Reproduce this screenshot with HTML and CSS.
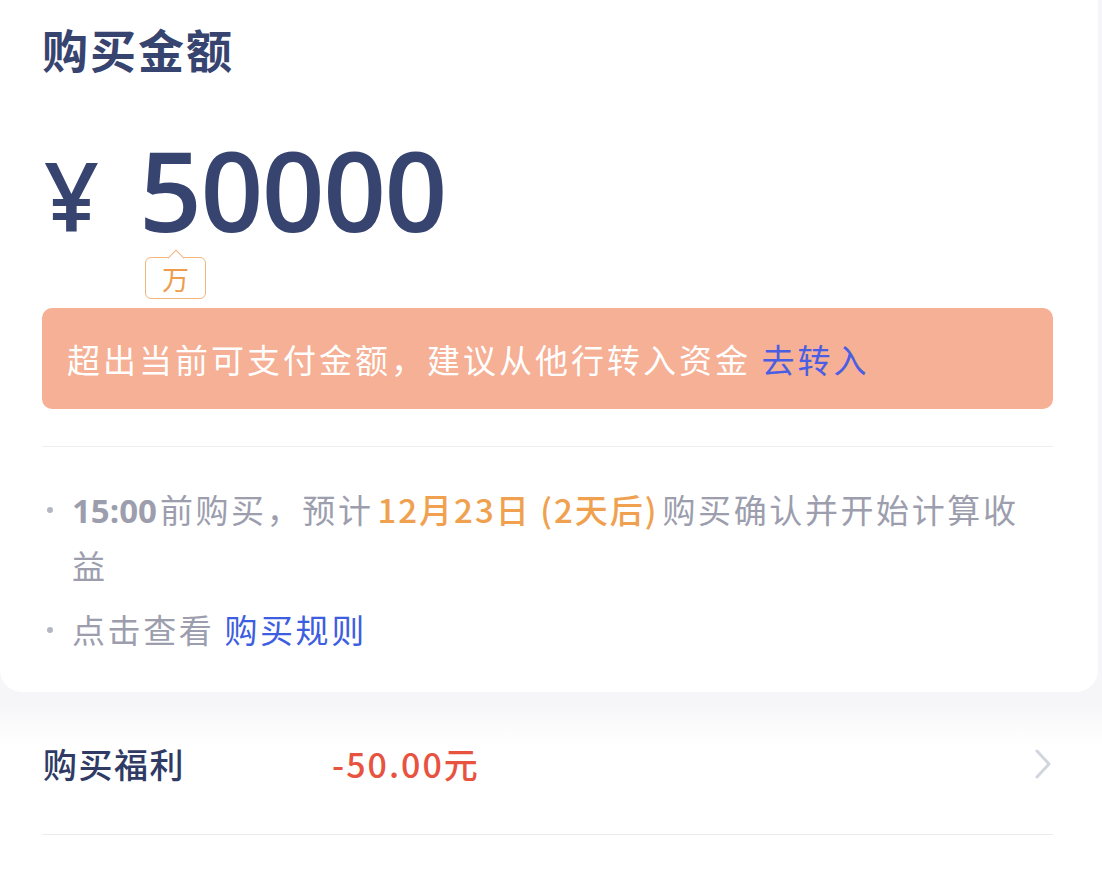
FILE: index.html
```html
<!DOCTYPE html>
<html lang="zh-CN">
<head>
<meta charset="utf-8">
<link rel="stylesheet" href="styles.css">
</head>
<body>
<div class="page">
  <section class="card">
    <h1 class="title">购买金额</h1>
    <div class="amount">
      <span class="yen">¥</span>
      <span class="num">50000</span>
    </div>
    <div class="unit-wrap">
      <span class="unit">万</span>
    </div>
    <div class="alert">超出当前可支付金额，建议从他行转入资金 <a class="link" href="#">去转入</a></div>
    <div class="divider"></div>
    <ul class="notes">
      <li><span class="strong">15:00</span>前购买，预计<span class="orange">12月23日 (2天后)</span>购买确认并开始计算收益</li>
      <li>点击查看 <a class="rule" href="#">购买规则</a></li>
    </ul>
  </section>
  <section class="row">
    <span class="row-label">购买福利</span>
    <span class="row-value">-50.00元</span>
    <svg class="chev" width="20" height="32" viewBox="0 0 20 32"><path d="M4 3 L16 16 L4 29" fill="none" stroke="#d3d5de" stroke-width="3" stroke-linecap="round" stroke-linejoin="round"/></svg>
  </section>
  <div class="row-divider"></div>
</div>
</body>
</html>
```

FILE: styles.css
```css
* { box-sizing: border-box; }
html, body { margin: 0; padding: 0; background: #fff; }
body {
  font-family: "Noto Sans CJK SC", "Noto Sans", sans-serif;
  width: 1102px;
  height: 869px;
  overflow: hidden;
}
.page {
  background: linear-gradient(to bottom, #f6f6f8 0, #f6f6f8 705px, #ffffff 745px);
  height: 869px;
}
.card {
  width: 1098px;
  height: 692px;
  background: #fff;
  border-radius: 0 0 22px 22px;
  padding: 18px 45px 0 42px;
}
.title {
  margin: 0;
  font-size: 46px;
  line-height: 60px;
  font-weight: 700;
  color: #374470;
  letter-spacing: 2px;
}
.amount {
  display: flex;
  align-items: baseline;
  margin-top: 53px;
  height: 116px;
  color: #374470;
  font-family: "Open Sans", "Noto Sans", sans-serif;
  font-weight: 600;
  line-height: 116px;
}
.yen {
  font-size: 96px;
  width: 97px;
  padding-left: 2px;
}
.num {
  font-size: 110px;
  letter-spacing: -1.5px;
}
.unit-wrap {
  margin-top: 10px;
  padding-left: 103px;
  height: 42px;
}
.unit {
  position: relative;
  display: inline-flex;
  align-items: center;
  justify-content: center;
  width: 61px;
  height: 42px;
  border: 1.5px solid #f2b57c;
  border-radius: 6px;
  color: #ef9c4d;
  font-size: 27px;
  line-height: 1;
  background: #fff;
}
.unit::before {
  content: "";
  position: absolute;
  left: 50%;
  width: 11px;
  height: 11px;
  margin-left: -6px;
  background: #fff;
  border-left: 1.5px solid #f2b57c;
  border-top: 1.5px solid #f2b57c;
  transform: rotate(45deg);
  top: -6.5px;
}
.alert {
  margin-top: 9px;
  width: 1011px;
  height: 101px;
  background: #f5b095;
  border-radius: 10px;
  padding-left: 25px;
  display: flex;
  align-items: center;
  color: #fff;
  font-size: 33px;
  letter-spacing: 3px;
  white-space: pre;
}
.link {
  color: #4a5ee3;
  text-decoration: none;
}
.divider {
  margin-top: 37px;
  width: 1011px;
  height: 1px;
  background: #eeeef1;
}
.notes {
  list-style: none;
  margin: 35px 0 0;
  padding: 0 0 0 30px;
  width: 1011px;
  font-size: 33px;
  letter-spacing: 2.6px;
  line-height: 55px;
  color: #9c9eae;
}
.notes li {
  position: relative;
  margin-bottom: 9px;
}
.notes li::before {
  content: "";
  position: absolute;
  left: -25px;
  top: 25px;
  width: 6px;
  height: 6px;
  border-radius: 50%;
  background: #b4b6c3;
}
.strong {
  font-family: "Open Sans", "Noto Sans CJK SC", sans-serif;
  font-weight: 700;
  letter-spacing: 0;
  margin-right: 3px;
}
.orange {
  color: #f0a150;
  font-weight: 500;
  letter-spacing: 2px;
  margin: 0 4px;
}
.rule {
  color: #3d5ee0;
  text-decoration: none;
}
.row {
  display: flex;
  align-items: center;
  height: 142px;
  padding: 0 49px 0 43px;
}
.row-label {
  width: 289px;
  font-size: 34px;
  font-weight: 500;
  color: #2f3b64;
  letter-spacing: 1.5px;
}
.row-value {
  flex: 1;
  font-size: 34px;
  color: #e8533f;
  font-weight: 500;
  letter-spacing: 2px;
}
.chev { display: block; margin-top: 2px; }
.row-divider {
  margin-left: 42px;
  width: 1011px;
  height: 1px;
  background: #ececef;
}
```
